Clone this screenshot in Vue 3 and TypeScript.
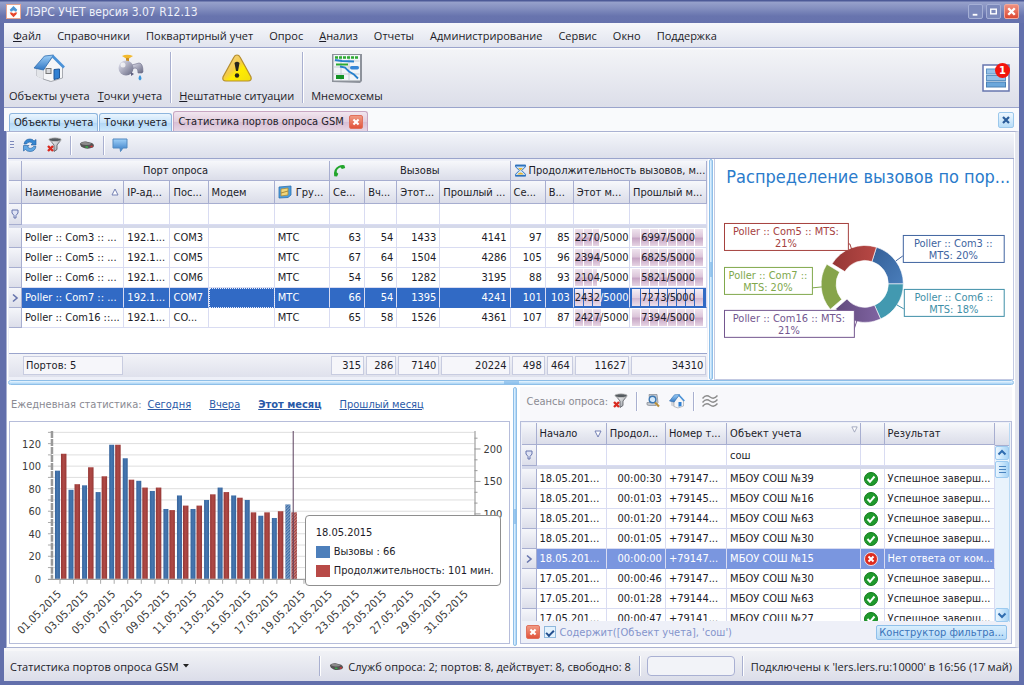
<script setup lang="ts">
import { ref } from 'vue'

interface PortRow {
  name: string
  ip: string
  port: string
  group: string
  calls: number[]
  duration: number[]
  month: number
  lastMonth: number
}

interface Session {
  start: string
  length: string
  phone: string
  object: string
  ok: boolean
  result: string
}

const menu = [
  { key: 'Ф', rest: 'айл' },
  { key: '', rest: 'Справочники' },
  { key: '', rest: 'Поквартирный учет' },
  { key: '', rest: 'Опрос' },
  { key: 'А', rest: 'нализ' },
  { key: '', rest: 'Отчеты' },
  { key: '', rest: 'Администрирование' },
  { key: '', rest: 'Сервис' },
  { key: '', rest: 'Окно' },
  { key: '', rest: 'Поддержка' },
]

const LIMIT = 5000
const portCols = [13, 102, 46, 38, 66, 55, 35, 32, 43, 70, 35, 28, 56, 77]
const selectedPort = ref(3)
const ports: PortRow[] = [
  { name: 'Poller :: Com3 :: ...', ip: '192.1...', port: 'COM3', group: 'МТС', calls: [63, 54, 1433, 4141], duration: [97, 85], month: 2270, lastMonth: 6997 },
  { name: 'Poller :: Com5 :: ...', ip: '192.1...', port: 'COM5', group: 'МТС', calls: [67, 64, 1504, 4286], duration: [105, 96], month: 2394, lastMonth: 6825 },
  { name: 'Poller :: Com6 :: ...', ip: '192.1...', port: 'COM6', group: 'МТС', calls: [54, 56, 1282, 3195], duration: [88, 93], month: 2104, lastMonth: 5821 },
  { name: 'Poller :: Com7 :: ...', ip: '192.1...', port: 'COM7', group: 'МТС', calls: [66, 54, 1395, 4241], duration: [101, 103], month: 2432, lastMonth: 7273 },
  { name: 'Poller :: Com16 ::...', ip: '192.1...', port: 'CO...', group: 'МТС', calls: [65, 58, 1526, 4361], duration: [107, 87], month: 2427, lastMonth: 7394 },
]
const totals = [315, 286, 7140, 20224, 498, 464, 11627, 34310]
const share = (v: number): string => Math.min(100, Math.round((v / LIMIT) * 100)) + '%'

const sessionCols = [14, 70, 59, 61, 133, 24, 110]
const selectedSession = ref(4)
const done = 'Успешное заверш...'
const sessions: Session[] = [
  { start: '18.05.201...', length: '00:00:30', phone: '+79147...', object: 'МБОУ СОШ №39', ok: true, result: done },
  { start: '18.05.201...', length: '00:01:03', phone: '+79145...', object: 'МБОУ СОШ №16', ok: true, result: done },
  { start: '18.05.201...', length: '00:01:20', phone: '+79144...', object: 'МБОУ СОШ №63', ok: true, result: done },
  { start: '18.05.201...', length: '00:01:05', phone: '+79147...', object: 'МБОУ СОШ №30', ok: true, result: done },
  { start: '18.05.201...', length: '00:00:00', phone: '+79147...', object: 'МБОУ СОШ №15', ok: false, result: 'Нет ответа от ком...' },
  { start: '17.05.201...', length: '00:00:46', phone: '+79147...', object: 'МБОУ СОШ №30', ok: true, result: done },
  { start: '17.05.201...', length: '00:01:28', phone: '+79144...', object: 'МБОУ СОШ №63', ok: true, result: done },
  { start: '17.05.201...', length: '00:00:47', phone: '+79141...', object: 'МБОУ СОШ №27', ok: true, result: done },
]
const objectFilter = ref('сош')
const filterOn = ref(true)

/* Daily chart */
const BASE = 157
const STEP = 13.57
const callsHeights = [96, 79, 83, 77, 119, 107, 87, 78, 62, 74, 62, 70, 81, 74, 70, 56, 54, 66]
const minuteHeights = [111, 84, 99, 91, 119, 88, 81, 81, 61, 65, 65, 75, 77, 72, 59, 59, 60, 59]
const yOf = (v: number): number => BASE - v * 1.128
const bars = callsHeights.map((c, i) => ({
  x: 45 + i * STEP,
  blue: yOf(c),
  red: yOf(minuteHeights[i]),
}))
const gridLines = Array.from({ length: 13 }, (_, i) => yOf((i + 1) * 10))
const leftTicks = [0, 20, 40, 60, 80, 100, 120]
const rightTicks = [100, 150, 200].map((v) => ({ v, y: BASE - v * 0.65 }))
const rightMinor = [3, 5, 7, 8, 10, 11, 13].map((k) => BASE - k * 10.83)
const dayTicks = Array.from({ length: 31 }, (_, i) => 50 + i * STEP)
const dayLabels = Array.from({ length: 16 }, (_, i) => ({
  text: String(i * 2 + 1).padStart(2, '0') + '.05.2015',
  x: 52 + i * 2 * STEP,
}))

/* Donut chart */
const CX = 149
const CY = 124
const rad = (a: number): number => ((a - 90) * Math.PI) / 180
function slice(from: number, to: number, shift = 0): string {
  const mid = rad((from + to) / 2)
  const cx = CX + Math.cos(mid) * shift
  const cy = CY + Math.sin(mid) * shift
  const p = (a: number, r: number): string =>
    (cx + Math.cos(rad(a)) * r).toFixed(1) + ' ' + (cy + Math.sin(rad(a)) * r).toFixed(1)
  return `M${p(from, 38.5)}A38.5 38.5 0 0 1 ${p(to, 38.5)}L${p(to, 23.5)}A23.5 23.5 0 0 0 ${p(from, 23.5)}Z`
}
const slices = [
  { d: slice(17.5, 90), fill: 'url(#pieBlue)' },
  { d: slice(90, 155.7), fill: '#4299b0' },
  { d: slice(155.7, 229.6), fill: 'url(#piePurple)' },
  { d: slice(229.6, 301.5, 5.3), fill: '#86a44a' },
  { d: slice(301.5, 377.5), fill: 'url(#pieRed)' },
]
const pieLabels = [
  { x: 8, y: 63, w: 124, a: 'Poller :: Com5 :: MTS:', b: '21%', c: '#a5413e', line: 'M132 84h2l2 6' },
  { x: 8, y: 107, w: 88, a: 'Poller :: Com7 ::', b: 'MTS: 20%', c: '#80a84c', line: 'M96 128l10 -1' },
  { x: 8, y: 150, w: 130, a: 'Poller :: Com16 :: MTS:', b: '21%', c: '#74578f', line: 'M138 170l3 -9' },
  { x: 187, y: 75, w: 101, a: 'Poller :: Com3 ::', b: 'MTS: 20%', c: '#4064a0', line: 'M187 96l-7 5' },
  { x: 188, y: 129, w: 100, a: 'Poller :: Com6 ::', b: 'MTS: 18%', c: '#3f8fa8', line: 'M188 149l-7 -4' },
]
</script>

<template>
  <div class="window">
    <svg class="defs" width="0" height="0" aria-hidden="true">
      <defs>
        <linearGradient id="gBlue" x1="0" y1="0" x2="0" y2="1"><stop offset="0" stop-color="#9fd0f8" /><stop offset="1" stop-color="#3278c4" /></linearGradient>
        <linearGradient id="gGrey" x1="0" y1="0" x2="1" y2="1"><stop offset="0" stop-color="#fdfdfd" /><stop offset="1" stop-color="#8f949c" /></linearGradient>
        <linearGradient id="gSteel" x1="0" y1="0" x2="1" y2="1"><stop offset="0" stop-color="#e8e8f4" /><stop offset="1" stop-color="#63657f" /></linearGradient>
        <linearGradient id="gWarn" x1="0" y1="0" x2="1" y2="1"><stop offset="0" stop-color="#f3d79a" /><stop offset="0.45" stop-color="#f4cb48" /><stop offset="0.6" stop-color="#ffec00" /><stop offset="1" stop-color="#f0dc10" /></linearGradient>
        <symbol id="funnelClear" viewBox="0 0 16 16">
          <path d="M4 3L8 8v6.500l3-2V8l4-5z" fill="url(#gGrey)" stroke="#55585e" stroke-width=".8" />
          <ellipse cx="9" cy="2.700" rx="6.200" ry="1.900" fill="#555b60" stroke="#c8c8c8" stroke-width=".8" />
          <path d="M2 9l5 5m0-5l-5 5" stroke="#d92a20" stroke-width="2.400" />
        </symbol>
        <symbol id="modem" viewBox="0 0 16 16">
          <path d="M1 6.500Q3 4 7 4.500l6 1.600q2 1 2 3l-1 1.500q-5 2-9 .5Q1 9.500 1 6.500z" fill="#555455" />
          <path d="M1.500 6.500Q4 4.500 8 5.200l4.500 1.300q-2 2-6 1.500T1.500 6.500z" fill="#8b8a8b" />
          <path d="M6.500 9.700l2.500.5" stroke="#35b04a" stroke-width="1.500" /><path d="M11.500 9.800l2-.5" stroke="#d33" stroke-width="1.500" />
        </symbol>
      </defs>
    </svg>

    <header class="titlebar">
      <svg class="app-icon" viewBox="0 0 16 16"><rect x=".5" y=".5" width="15" height="15" fill="#fff" stroke="#e9a58e" /><path d="M8 2l4 4-1 2H5L4 6z" fill="#4f97d4" /><path d="M4 9h8l-1 2-3 3-3-3z" fill="#e8452c" /><circle cx="8" cy="8.500" r="1.500" fill="#fff" /></svg>
      <h1>ЛЭРС УЧЕТ версия 3.07 R12.13</h1>
      <div class="win-buttons">
        <button aria-label="Свернуть"><svg viewBox="0 0 14 14"><path d="M4 10.500h5" stroke="#fff" stroke-width="2" /></svg></button>
        <button aria-label="Развернуть"><svg viewBox="0 0 14 14"><rect x="4" y="4.500" width="6" height="5" fill="none" stroke="#fff" stroke-width="1.500" /></svg></button>
        <button class="close" aria-label="Закрыть"><svg viewBox="0 0 14 14"><path d="M3.500 3.500l7 7m0-7l-7 7" stroke="#fff" stroke-width="2.600" /></svg></button>
      </div>
    </header>

    <nav class="menubar">
      <button v-for="m in menu" :key="m.rest"><u v-if="m.key">{{ m.key }}</u>{{ m.rest }}</button>
    </nav>

    <div class="toolbar">
      <button class="big">
        <svg viewBox="0 0 32 32">
          <path d="M4 16v8l13 5V14z" fill="#d3d6db" stroke="#9498a0" stroke-width=".8" />
          <path d="M10 16L20 5l9.500 10v11L18 29.500 10 27z" fill="#f5f6f8" stroke="#9498a0" stroke-width=".8" />
          <path d="M4 17l6 0v10l-6-2.500z" fill="#e3e5e9" />
          <path d="M1 16L11.500 4l9-1L10.500 18z" fill="url(#gBlue)" stroke="#2d6cae" stroke-width=".8" />
          <path d="M19.500 4L31 15.500" stroke="#4a92d8" stroke-width="2.600" />
          <rect x="13" y="16.500" width="5" height="5" fill="#d8dadd" stroke="#777" />
          <path d="M21 17.500l5.500-.5v9l-5.500 1.500z" fill="#2f7fd2" stroke="#1d5799" />
        </svg>
        <span>Объекты учета</span>
      </button>
      <button class="big">
        <svg viewBox="0 0 32 32">
          <path d="M8 4q5-2.500 11 0l-4 2.500h-3z" fill="#f2b92d" /><path d="M12 6h3v5h-3z" fill="#c98e24" />
          <path d="M18 13l7-2q4 0 4 9l-1 1h-4q0-5-3-5l-4 1z" fill="url(#gSteel)" stroke="#6b6c88" stroke-width=".6" />
          <circle cx="12" cy="16" r="7.500" fill="url(#gSteel)" /><circle cx="9" cy="13" r="2.500" fill="#fff" opacity=".7" />
          <path d="M17 20l3 2-3 2z" fill="#5f6080" />
          <path d="M26 23q3 4 0 5.500-3-1.500 0-5.500z" fill="#3996dc" />
        </svg>
        <span><u>Т</u>очки учета</span>
      </button>
      <span class="vline"></span>
      <button class="big">
        <svg viewBox="0 0 32 32">
          <path d="M16 3q2 0 3 2l11 20q1 4-3 4H5q-4 0-3-4L13 5q1-2 3-2z" fill="url(#gWarn)" stroke="#b58d2c" stroke-width="1.200" />
          <path d="M13.500 11q2.500-2.500 5 0l-1.500 8h-2z" fill="#26241c" /><circle cx="16" cy="23.500" r="2.200" fill="#26241c" />
        </svg>
        <span><u>Н</u>ештатные ситуации</span>
      </button>
      <span class="vline"></span>
      <button class="big">
        <svg viewBox="0 0 32 32">
          <path d="M1 2h30v27l-2 2-28-1z" fill="#8d929b" /><rect x="2.500" y="3" width="26.500" height="25.500" fill="#f2f5f8" />
          <path d="M2.500 9h26M2.500 15h26M2.500 22h26M10 3v25M18 3v25" stroke="#c7cdd6" />
          <path d="M4 5.500h24" stroke="#2eaa32" stroke-width="2.500" stroke-dasharray="3 1" /><path d="M5 12.500h12" stroke="#2eaa32" stroke-width="2" />
          <rect x="5" y="23" width="8" height="4" fill="#139325" />
          <path d="M4 8l7 1 12 .5" fill="none" stroke="#2680cc" stroke-width="1.800" />
          <path d="M9 14.500l5 1 4 4 5 3 4 4" fill="none" stroke="#2680cc" stroke-width="1.800" />
          <rect x="19" y="14" width="9" height="3.500" rx="1.700" fill="#3687d8" />
        </svg>
        <span>Мнемосхемы</span>
      </button>
      <button class="notes" aria-label="Уведомления">
        <svg viewBox="0 0 28 28"><rect x="1" y="1" width="26" height="26" fill="#fff" stroke="#6776ae" stroke-width="1.500" /><rect x="4.500" y="5" width="19" height="5" fill="#95c1e8" stroke="#5d93c4" /><rect x="4.500" y="11.500" width="19" height="5" fill="#95c1e8" stroke="#5d93c4" /><rect x="4.500" y="18" width="19" height="5" fill="#6ba7db" stroke="#4a80b4" /></svg>
        <b>1</b>
      </button>
    </div>

    <div class="tabs">
      <button class="tab">Объекты учета</button>
      <button class="tab">Точки учета</button>
      <div class="tab active">
        <button class="plain">Статистика портов опроса GSM</button>
        <button class="x-red" aria-label="Закрыть вкладку"><svg viewBox="0 0 14 14"><path d="M4 4l6 6m0-6l-6 6" stroke="#fff" stroke-width="2.400" /></svg></button>
      </div>
      <button class="x-blue" aria-label="Закрыть страницу"><svg viewBox="0 0 14 14"><path d="M4 4l6 6m0-6l-6 6" stroke="#2b5d9b" stroke-width="2.200" /></svg></button>
    </div>

    <main class="page">
      <div class="subbar">
        <span class="grip"></span>
        <button aria-label="Обновить"><svg viewBox="0 0 16 16"><path d="M2 7q1-5 6-5 3 0 4 2l2-1.500V8H9l1.500-1.500Q7 3.500 4.500 7z" fill="#3787d0" stroke="#1e5c9e" stroke-width=".6" /><path d="M14 9.500q-1 5-6 5-3 0-4.500-2L1.500 14V8.500H7L5.500 10q3.500 3 6-.5z" fill="#61a8e4" stroke="#1e5c9e" stroke-width=".6" /></svg></button>
        <button aria-label="Сбросить фильтр"><svg><use href="#funnelClear" /></svg></button>
        <span class="vline"></span>
        <button aria-label="Модем"><svg><use href="#modem" /></svg></button>
        <span class="vline"></span>
        <button aria-label="Комментарий"><svg viewBox="0 0 16 16"><path d="M1 2h14v9h-4l-2.500 3.500L8 11H1z" fill="url(#gBlue)" stroke="#5289c0" /></svg></button>
      </div>

      <div class="row top">
        <section class="ports">
          <table>
            <colgroup><col v-for="(w, i) in portCols" :key="i" :style="{ width: w + 'px' }" /></colgroup>
            <thead>
              <tr class="bands">
                <th></th>
                <th colspan="5">Порт опроса</th>
                <th colspan="4"><svg class="band-icon" viewBox="0 0 16 16"><path d="M1.500 15Q0 6 7 2.500 10 1 14 1.500l1 3.500-4 1-2-2Q4.500 6 4.500 10l2 2-1.500 3.500z" fill="#22a52b" /></svg>Вызовы</th>
                <th colspan="4"><svg class="band-icon" viewBox="0 0 16 16"><path d="M2 1.500h12v2L9.500 8l4.500 4.500v2H2v-2L6.500 8 2 3.500z" fill="#cfe4f8" stroke="#2d72bd" stroke-width="1.200" /><path d="M5 5h6L8 8zM4 13q4-5 8 0z" fill="#e8b52e" /><path d="M1.500 2h13m-13 12.500h13" stroke="#2d72bd" stroke-width="2" /></svg><span class="shifted">Продолжительность вызовов, м...</span></th>
              </tr>
              <tr class="heads">
                <th></th>
                <th>Наименование<svg class="sort" viewBox="0 0 8 8"><path d="M4 1L7 7H1z" fill="#fff" stroke="#7480b4" /></svg></th>
                <th>IP-ад...</th><th>Пос...</th><th>Модем</th>
                <th><svg class="sim" viewBox="0 0 14 14"><path d="M1 2l12-1v9l-3 2.500L1 13z" fill="#4b9ee0" stroke="#2b70ae" stroke-width=".8" /><path d="M3 4l7-1v7l-7 1z" fill="#f1d67b" stroke="#a98b3a" stroke-width=".8" /><path d="M3 8l7-2" stroke="#a98b3a" /></svg>Гру...</th>
                <th>Се...</th><th>Вч...</th><th>Этот...</th><th>Прошлый ...</th><th>Се...</th><th>В...</th><th>Этот м...</th><th>Прошлый м...</th>
              </tr>
              <tr class="filter">
                <th><svg viewBox="0 0 8 10"><path d="M1 1h6v3L5 6.500V9H3V6.500L1 4z" fill="#dfe3f4" stroke="#6674ad" /></svg></th>
                <td v-for="n in 13" :key="n"><input aria-label="Фильтр" /></td>
              </tr>
              <tr class="gap"><td colspan="14"></td></tr>
            </thead>
            <tbody>
              <tr v-for="(p, i) in ports" :key="p.name" :class="{ sel: i === selectedPort }" @click="selectedPort = i">
                <th><svg v-if="i === selectedPort" viewBox="0 0 8 10"><path d="M2 1.500L6 5 2 8.500" fill="none" stroke="#6674ad" stroke-width="1.600" /></svg></th>
                <td>{{ p.name }}</td><td>{{ p.ip }}</td><td>{{ p.port }}</td>
                <td :class="{ focus: i === selectedPort }"></td>
                <td>{{ p.group }}</td>
                <td v-for="(c, k) in p.calls" :key="'c' + k" class="num">{{ c }}</td>
                <td v-for="(c, k) in p.duration" :key="'d' + k" class="num">{{ c }}</td>
                <td class="prog"><div><i :style="{ width: share(p.month) }"></i><span><em>{{ p.month }}</em>/5000</span></div></td>
                <td class="prog full"><div><i :style="{ width: share(p.lastMonth) }"></i><span><em>{{ p.lastMonth }}/5000</em></span></div></td>
              </tr>
              <tr class="space"><td colspan="14"></td></tr>
            </tbody>
            <tfoot>
              <tr>
                <td></td><td><div class="left">Портов: 5</div></td><td colspan="4"></td>
                <td v-for="t in totals" :key="t"><div>{{ t }}</div></td>
              </tr>
            </tfoot>
          </table>
        </section>
        <div class="split v"></div>
        <section class="pie">
          <h2>Распределение вызовов по пор...</h2>
          <svg viewBox="-1 38 298 180">
            <defs>
              <linearGradient id="pieBlue" x1="0" y1="0" x2="1" y2="1"><stop offset="0" stop-color="#345f97" /><stop offset="1" stop-color="#4a7ebb" /></linearGradient>
              <linearGradient id="piePurple" x1="0" y1="0" x2="1" y2="0"><stop offset="0" stop-color="#614a7d" /><stop offset="1" stop-color="#8064a2" /></linearGradient>
              <linearGradient id="pieRed" x1="0" y1="0" x2="1" y2="0"><stop offset="0" stop-color="#953735" /><stop offset="1" stop-color="#b84845" /></linearGradient>
            </defs>
            <path v-for="s in slices" :key="s.d" :d="s.d" :fill="s.fill" stroke="#fff" stroke-width=".6" />
            <g v-for="l in pieLabels" :key="l.a">
              <path :d="l.line" fill="none" :stroke="l.c" />
              <rect :x="l.x + 0.5" :y="l.y + 0.5" :width="l.w" height="27" fill="#fff" :stroke="l.c" />
              <text :x="l.x + l.w / 2" :y="l.y + 12" :fill="l.c">{{ l.a }}</text>
              <text :x="l.x + l.w / 2" :y="l.y + 24" :fill="l.c">{{ l.b }}</text>
            </g>
          </svg>
        </section>
      </div>

      <div class="split h"></div>

      <div class="row bottom">
        <section class="daily">
          <div class="links">
            <span>Ежедневная статистика:</span>
            <a href="#">Сегодня</a><a href="#">Вчера</a><a href="#" class="current">Этот месяц</a><a href="#">Прошлый месяц</a>
          </div>
          <div class="chart">
            <svg viewBox="0 0 500 220">
              <defs>
                <linearGradient id="barBlue"><stop offset="0" stop-color="#36649c" /><stop offset=".5" stop-color="#4677b0" /><stop offset="1" stop-color="#36649c" /></linearGradient>
                <linearGradient id="barRed"><stop offset="0" stop-color="#963836" /><stop offset=".5" stop-color="#b04a46" /><stop offset="1" stop-color="#963836" /></linearGradient>
                <pattern id="hatch" width="3" height="3" patternUnits="userSpaceOnUse"><path d="M0 3L3 0" stroke="#fff" stroke-width=".7" opacity=".7" /></pattern>
              </defs>
              <path v-for="y in gridLines" :key="y" :d="`M43 ${y}H465`" stroke="#dedede" />
              <path v-for="y in gridLines" :key="'t' + y" :d="`M38 ${y}h4`" stroke="#aaa" />
              <g v-for="(b, i) in bars" :key="b.x">
                <rect :x="b.x" :y="b.blue" width="5" :height="BASE - b.blue" fill="url(#barBlue)" />
                <rect :x="b.x + 6" :y="b.red" width="5.500" :height="BASE - b.red" fill="url(#barRed)" />
                <rect v-if="i === 17" :x="b.x" :y="b.blue" width="5" :height="BASE - b.blue" fill="url(#hatch)" />
                <rect v-if="i === 17" :x="b.x + 6" :y="b.red" width="5.500" :height="BASE - b.red" fill="url(#hatch)" />
              </g>
              <path d="M42 9V157" stroke="#999" stroke-width="2.500" stroke-dasharray="7 1" />
              <path d="M38 157.500H465.500V9" fill="none" stroke="#8b8b8b" />
              <path v-for="x in dayTicks" :key="x" :d="`M${x} 157v5`" stroke="#aaa" />
              <path v-for="t in rightTicks" :key="t.v" :d="`M465 ${t.y}h6`" stroke="#999" />
              <path v-for="y in rightMinor" :key="y" :d="`M465 ${y}h3`" stroke="#999" />
              <path d="M283.500 9V157" stroke="#5a3f5c" />
              <text v-for="v in leftTicks" :key="v" x="31" :y="yOf(v) + 4" text-anchor="end">{{ v }}</text>
              <text v-for="t in rightTicks" :key="t.v" x="474" :y="t.y + 4">{{ t.v }}</text>
              <text v-for="d in dayLabels" :key="d.text" class="day" text-anchor="end" :transform="`translate(${d.x} 173) rotate(-45)`">{{ d.text }}</text>
            </svg>
            <div class="tip">
              <p>18.05.2015</p>
              <p><i class="blue"></i>Вызовы : 66</p>
              <p><i class="red"></i>Продолжительность: 101 мин.</p>
            </div>
          </div>
        </section>
        <div class="split v"></div>
        <section class="sessions">
          <div class="subbar light">
            <span>Сеансы опроса:</span>
            <button aria-label="Сбросить фильтр"><svg><use href="#funnelClear" /></svg></button>
            <span class="vline"></span>
            <button aria-label="Журнал"><svg viewBox="0 0 16 16"><path d="M4 1.500h8l1 8-2 3H4q-3 0-2-3h3z" fill="#c4c8ce" stroke="#858a92" stroke-width=".7" /><circle cx="7.500" cy="6.500" r="3.300" fill="#d4e9fb" stroke="#3d79b5" stroke-width="1.400" /><path d="M10 9.500l4 4" stroke="#b9903c" stroke-width="2.200" /></svg></button>
            <button aria-label="Объект"><svg viewBox="0 0 16 16"><path d="M2 8v4.500l7 2.500V7z" fill="#d3d6db" /><path d="M5 8l5-5.500 4.500 5.500v5L9 15l-4-1.500z" fill="#f5f6f8" stroke="#9498a0" stroke-width=".6" /><path d="M.5 8L5.500 1.800l5-.3L5.200 9z" fill="url(#gBlue)" stroke="#2d6cae" stroke-width=".6" /><path d="M9.800 2l5.500 6" stroke="#4a92d8" stroke-width="1.600" /><path d="M9.500 9h3v4l-3 .8z" fill="#2f7fd2" /></svg></button>
            <span class="vline"></span>
            <button aria-label="Показания"><svg viewBox="0 0 16 16"><path d="M.5 5.500Q4 1 8 4t7.500-1.500M.5 9.500Q4 5 8 8t7.500-1.500M.5 13.500Q4 9 8 12t7.500-1.500" fill="none" stroke="#8c8c8c" stroke-width="1.400" /></svg></button>
          </div>
          <div class="grid">
            <div class="grid-body">
              <div class="clip">
                <table>
                  <colgroup><col v-for="(w, i) in sessionCols" :key="i" :style="{ width: w + 'px' }" /></colgroup>
                  <thead>
                    <tr class="heads">
                      <th></th>
                      <th>Начало<svg class="sort" viewBox="0 0 8 8"><path d="M1 1h6L4 7z" fill="#fff" stroke="#7480b4" /></svg></th>
                      <th>Продол...</th><th>Номер т...</th>
                      <th>Объект учета<svg class="sort pale" viewBox="0 0 8 8"><path d="M1 1h6L4 7z" fill="#fff" stroke="#9aa0b8" /></svg></th>
                      <th></th><th>Результат</th>
                    </tr>
                    <tr class="filter">
                      <th><svg viewBox="0 0 8 10"><path d="M1 1h6v3L5 6.500V9H3V6.500L1 4z" fill="#dfe3f4" stroke="#6674ad" /></svg></th>
                      <td><input aria-label="Фильтр: начало" /></td>
                      <td><input aria-label="Фильтр: продолжительность" /></td>
                      <td><input aria-label="Фильтр: номер" /></td>
                      <td><input v-model="objectFilter" aria-label="Фильтр: объект учета" /></td>
                      <td></td>
                      <td><input aria-label="Фильтр: результат" /></td>
                    </tr>
                    <tr class="gap"><td colspan="7"></td></tr>
                  </thead>
                  <tbody>
                    <tr v-for="(s, i) in sessions" :key="i" :class="{ soft: i === selectedSession }" @click="selectedSession = i">
                      <th><svg v-if="i === selectedSession" viewBox="0 0 8 10"><path d="M2 1.500L6 5 2 8.500" fill="none" stroke="#6674ad" stroke-width="1.600" /></svg></th>
                      <td>{{ s.start }}</td><td class="num">{{ s.length }}</td><td>{{ s.phone }}</td><td>{{ s.object }}</td>
                      <td class="state">
                        <svg v-if="s.ok" viewBox="0 0 14 14"><circle cx="7" cy="7" r="6.500" fill="#1f9a2c" stroke="#127a1d" /><path d="M3.500 7l2.500 2.800L10.500 4.500" fill="none" stroke="#fff" stroke-width="2" /></svg>
                        <svg v-else viewBox="0 0 14 14"><circle cx="7" cy="7" r="6.500" fill="#dd2b1f" stroke="#fff" stroke-width=".8" /><path d="M4.500 4.500l5 5m0-5l-5 5" stroke="#fff" stroke-width="2" /></svg>
                      </td>
                      <td>{{ s.result }}</td>
                    </tr>
                  </tbody>
                </table>
              </div>
              <div class="scroll">
                <div class="corner"></div>
                <button aria-label="Вверх"><svg viewBox="0 0 10 10"><path d="M1.500 6.500L5 3l3.500 3.500" fill="none" stroke="#2f6db0" stroke-width="2" /></svg></button>
                <div class="thumb"></div>
                <div class="track"></div>
                <button aria-label="Вниз"><svg viewBox="0 0 10 10"><path d="M1.500 3.500L5 7l3.500-3.500" fill="none" stroke="#2f6db0" stroke-width="2" /></svg></button>
              </div>
            </div>
            <div class="criteria">
              <button class="x-red" aria-label="Удалить фильтр"><svg viewBox="0 0 14 14"><path d="M4 4l6 6m0-6l-6 6" stroke="#fff" stroke-width="2.400" /></svg></button>
              <label><input v-model="filterOn" type="checkbox" />Содержит([Объект учета], 'сош')</label>
              <button class="builder">Конструктор фильтра...</button>
            </div>
          </div>
        </section>
      </div>
    </main>

    <footer class="status">
      <button class="plain view">Статистика портов опроса GSM<svg viewBox="0 0 6 4"><path d="M0 0h6L3 3.500z" fill="#222" /></svg></button>
      <span class="vline"></span>
      <span class="service"><svg><use href="#modem" /></svg>Служб опроса: 2; портов: 8, действует: 8, свободно: 8</span>
      <span class="vline"></span>
      <div class="progress"></div>
      <span class="vline"></span>
      <span class="conn">Подключены к 'lers.lers.ru:10000' в 16:56 (17 май)</span>
    </footer>
  </div>
</template>

<style>
html, body { margin: 0; background: #5c69a6; }
</style>

<style scoped>
* { box-sizing: border-box; }
.window {
  min-height: 100vh; display: flex; flex-direction: column; padding: 0 5px 4px 4px;
  background: #626fab; color: #1c1c28; font: 11px "DejaVu Sans Condensed", "DejaVu Sans", sans-serif;
}
.defs { position: absolute; }
button { font: inherit; color: inherit; border: 0; background: none; padding: 0; margin: 0; white-space: nowrap; }
svg { display: block; flex: none; }
.vline { width: 1px; background: #a9b0d0; box-shadow: 1px 0 #fff; flex: none; }

.titlebar {
  height: 23px; margin: 0 -5px 0 -4px; padding: 0 5px 0 6px; display: flex; align-items: center; gap: 4px; flex: none;
  background: linear-gradient(#4d5a97 0 1px, #97a1cb 2px, #8590c0 8px, #6874ae 16px, #6672ad); color: #eef0fa;
}
.app-icon { width: 15px; height: 15px; }
.titlebar h1 { margin: 0; flex: 1; font: 12px "DejaVu Sans Condensed", sans-serif; }
.win-buttons { display: flex; gap: 3px; }
.win-buttons button { width: 15px; height: 15px; border: 1px solid #a5afd5; border-radius: 2px; background: #7c89bb; }
.win-buttons svg { width: 13px; height: 13px; }
.win-buttons .close { background: linear-gradient(#f09080, #dc4a34); border-color: #f0a89c; }

.menubar {
  height: 25px; padding: 0 9px; display: flex; align-items: center; gap: 16px; flex: none;
  background: linear-gradient(#f6f7fa, #e1e4ee); border-bottom: 1px solid #9aa4cc; font: 11px "Open Sans", "Noto Sans", sans-serif;
}
.toolbar {
  height: 60px; padding: 4px 9px 4px 5px; display: flex; align-items: stretch; flex: none;
  background: linear-gradient(#fff, #f3f4f7 2px, #dcdee9); border-bottom: 1px solid #9aa4cc; font: 11px "Open Sans", "Noto Sans", sans-serif;
}
.big { display: flex; flex-direction: column; align-items: center; justify-content: space-between; margin-right: 8px; line-height: 15px; }
.big svg { width: 32px; height: 32px; }
.toolbar .vline { margin-right: 8px; }
.notes { position: relative; margin-left: auto; align-self: center; }
.notes svg { width: 28px; height: 28px; }
.notes b {
  position: absolute; right: 0; top: -1px; width: 15px; height: 15px; border-radius: 50%; background: #f3140c; color: #fff;
  font: bold 11px/15px "DejaVu Sans Condensed", sans-serif;
}

.tabs { height: 23px; padding: 3px 5px 0; display: flex; align-items: flex-end; background: #f9fafc; flex: none; }
.tab {
  height: 18px; padding: 0 4px; margin-right: 1px; border: 1px solid #8db5dd; border-bottom: 0; border-radius: 3px 3px 0 0;
  background: linear-gradient(#eaf5fe, #c8e3f9 50%, #b4d8f6 55%, #cde8fb);
}
.tab.active {
  height: 20px; display: flex; align-items: center; gap: 5px; padding: 0 4px; border-color: #c7a6c2;
  background: linear-gradient(#f1e6ef, #e2cede 50%, #d8bfd5 55%, #e7d6e4);
}
.x-red { width: 14px; height: 14px; border: 1px solid #e0705c; border-radius: 2px; background: linear-gradient(#f09a84, #e1543c); flex: none; }
.x-red svg { width: 12px; height: 12px; }
.x-blue { width: 16px; height: 16px; margin: 0 0 3px auto; border: 1px solid #9cc8ec; border-radius: 2px; background: linear-gradient(#eef8ff, #b8ddf8); }
.x-blue svg { width: 14px; height: 14px; }

.page { flex: 1; margin: 0 0 0 2px; padding: 0 1px 1px; display: flex; flex-direction: column; background: #fff; border: 1px solid #aab2d2; border-width: 1px 0 1px 1px; border-right: 4px solid #e4e6ee; }
.subbar {
  height: 27px; display: flex; align-items: center; gap: 8px; padding: 0 2px; flex: none;
  background: linear-gradient(#fff, #f2f4f9 2px, #dcdfeb); border-bottom: 1px solid #9aa4cc;
}
.subbar svg { width: 16px; height: 16px; }
.subbar .vline { height: 19px; }
.grip { width: 4px; height: 8px; background: repeating-linear-gradient(#7e8abb 0 1px, #eceef6 1px 3px); }

.row { display: grid; }
.row.top { grid-template-columns: minmax(0, 701fr) 6px minmax(0, 300fr); }
.row.bottom { grid-template-columns: minmax(0, 505fr) 6px minmax(0, 496fr); flex: 1; }
.split { border: 1px solid #8fbfe8; background: #c9e5fb; display: flex; align-items: center; justify-content: center; }
.split.v { border-radius: 3px; margin: 0 1px; background: linear-gradient(90deg, #eaf6ff, #a8d3f5); }
.split.h { height: 5px; margin-bottom: 2px; border-radius: 3px; background: linear-gradient(#eaf6ff, #a8d3f5); }
.split::before { content: ""; background: #74b1e6; opacity: .6; }
.split.v::before { width: 4px; height: 15px; }
.split.h::before { width: 15px; height: 3px; }

.ports { padding: 2px 1px 3px; background: #eef0f8; }
table { width: 100%; table-layout: fixed; border-collapse: separate; border-spacing: 0; background: #fff; }
th, td { padding: 0; overflow: hidden; white-space: nowrap; font-weight: normal; text-align: left; }
th { background: linear-gradient(#f7f8fb, #e8eaf2 50%, #dbdde9); border-right: 1px solid #a7aed0; border-bottom: 1px solid #a7aed0; }
.bands th { height: 20px; text-align: center; position: relative; }
.band-icon { position: absolute; left: 3px; top: 3px; width: 13px; height: 13px; }
.shifted { padding-left: 17px; }
.heads th { height: 23px; padding-left: 3px; position: relative; }
.grid .heads th { height: 22px; }
.sort { position: absolute; right: 4px; top: 7px; width: 8px; height: 8px; }
.sort.pale { top: 3px; right: 2px; width: 7px; height: 7px; }
.sim { display: inline-block; width: 14px; height: 14px; margin-right: 4px; vertical-align: -3px; }
.filter th, tbody th { height: 20px; background: linear-gradient(#f5f6fa, #dcdeea); }
.filter th { height: 21px; }
.filter th svg, tbody th svg { width: 8px; height: 10px; margin: 0 auto; }
.filter td, tbody td { border-right: 1px solid #d9dcf2; border-bottom: 1px solid #d9dcf2; }
.filter input { display: block; width: 100%; height: 18px; padding: 0 3px; border: 0; background: none; font: inherit; color: inherit; outline: 0; }
.gap td { height: 3px; background: #d5d9ea; }
tbody td { padding: 0 3px; }
.num { text-align: right; }
.sel td { background: #316ac5; color: #fff; border-bottom-color: #316ac5; }
.sel .focus { outline: 1px dotted #e8ecfa; outline-offset: -1px; }
.soft td { background: #7a96df; color: #fff; border-bottom-color: #7a96df; }
.prog { padding: 0 1px; }
.prog div { position: relative; height: 17px; line-height: 17px; text-align: center; }
.prog i {
  position: absolute; left: 0; top: 0; bottom: 0;
  background: linear-gradient(90deg, transparent 8px, #fff 8px) 0 0 / 9px 100%, linear-gradient(#efe4ee, #dcc6da 45%, #c7a6c5 55%, #e6d5e4);
}
.sel .prog i { background: linear-gradient(90deg, transparent 8px, #316ac5 8px) 0 0 / 9px 100%, linear-gradient(#f6eff6, #e2d0e1 50%, #d2b8d1 55%, #ecdfeb); }
.prog span { position: relative; }
.prog em { font-style: normal; color: #1c1c28; }
.prog.full { padding: 0 2px; }
.space td { height: 25px; border: 0; }
tfoot td { height: 24px; border-top: 1px solid #9aa4cc; background: linear-gradient(#f2f3f8, #dfe1ec); }
tfoot div { height: 19px; margin: 0 1px; padding: 0 2px; line-height: 18px; text-align: right; background: #f6f6fa; border: 1px solid #c8cce0; }
tfoot .left { text-align: left; }

.pie { border: 1px solid #c3c9e2; border-top: 0; background: #fff; }
.pie h2 { height: 39px; margin: 0; padding: 7px 11px 0; font: 18px/22px "DejaVu Sans Condensed", sans-serif; color: #2a7bcb; white-space: nowrap; }
.pie svg { width: 100%; }
.pie text { text-anchor: middle; font-size: 11px; }

.daily { display: flex; flex-direction: column; padding: 0 2px 2px 1px; }
.links { height: 34px; display: flex; align-items: center; padding-left: 2px; color: #8a8a92; flex: none; }
.links span { margin-right: 6px; }
.links a { color: #2a5aa8; margin-right: 18px; }
.links .current { font-weight: bold; }
.chart { position: relative; flex: 1; border: 1px solid #b6bdda; }
.chart > svg { width: 100%; }
.chart text { font-size: 11px; fill: #3a3a3a; }
.tip {
  position: absolute; left: 59%; top: 93px; padding: 7px 6px 5px 10px; border: 1px solid #8f8f8f; border-radius: 4px; background: #fff;
}
.tip p { margin: 0; line-height: 19px; display: flex; align-items: center; gap: 4px; white-space: nowrap; }
.tip i { width: 14px; height: 12px; background: #4d7fbb; flex: none; }
.tip .red { background: #b84a47; }

.sessions { display: flex; flex-direction: column; padding: 0 2px 2px; min-width: 0; }
.subbar.light { height: 34px; background: #f8f8fb; border: 0; padding: 0 6px 6px; color: #8a8a92; }
.subbar.light button:first-of-type { margin-left: -4px; }
.grid { flex: 1; display: flex; flex-direction: column; border: 1px solid #b6bdda; padding: 1px; background: #eef0f8; }
.grid-body { flex: 1; display: flex; min-height: 198px; }
.clip { flex: 1; overflow: hidden; height: 198px; min-width: 0; }
.state svg { width: 14px; height: 14px; }
.scroll { width: 15px; display: flex; flex-direction: column; background: #e9f3fc; border-right: 1px solid #b9d9f3; }
.corner { height: 23px; background: linear-gradient(#f7f8fb, #dbdde9); border-bottom: 1px solid #a7aed0; }
.scroll button { height: 14px; border: 1px solid #9ccaf0; border-radius: 2px; background: linear-gradient(90deg, #eaf6ff, #a9d5f6); }
.scroll svg { width: 10px; height: 10px; margin: 0 auto; }
.thumb { height: 17px; margin-top: 1px; border: 1px solid #9ccaf0; border-radius: 2px; background: repeating-linear-gradient(#4a84c0 0 1px, transparent 1px 3px) center / 7px 7px no-repeat, linear-gradient(90deg, #eaf6ff, #a9d5f6); }
.track { flex: 1; }
.criteria { height: 20px; display: flex; align-items: center; gap: 4px; padding: 0 3px 0 4px; color: #8494cc; }
.criteria label { display: flex; align-items: center; gap: 3px; flex: 1; white-space: nowrap; }
.criteria input {
  appearance: none; width: 12px; height: 12px; margin: 0; border: 1px solid #8fb8dc; background: #e4f2fd; display: grid; place-items: center;
}
.criteria input:checked::before { content: ""; width: 6px; height: 3px; border: solid #234f8e; border-width: 0 0 2px 2px; rotate: -45deg; }
.builder { height: 15px; padding: 0 2px; border: 1px solid #8fc0ea; border-radius: 2px; background: linear-gradient(#d9eefd, #b5daf7); color: #3a74ba; }

.status {
  height: 33px; padding: 0 7px 0 6px; display: flex; align-items: center; flex: none; border-top: 3px solid #f7f7f9;
  background: linear-gradient(#f1f2f6, #dbdde9); font: 11px "Open Sans", "Noto Sans", sans-serif; white-space: nowrap;
}
.status .vline { height: 20px; }
.view { display: flex; align-items: center; gap: 4px; flex: 1; }
.view svg { width: 6px; height: 4px; }
.service { display: flex; align-items: center; gap: 4px; padding: 0 8px 0 9px; }
.service svg { width: 15px; height: 15px; }
.progress { width: 88px; height: 20px; margin: 0 7px; border: 1px solid #a9b0d3; border-radius: 4px; background: #f2f3f8; }
.conn { padding-left: 8px; }
</style>
